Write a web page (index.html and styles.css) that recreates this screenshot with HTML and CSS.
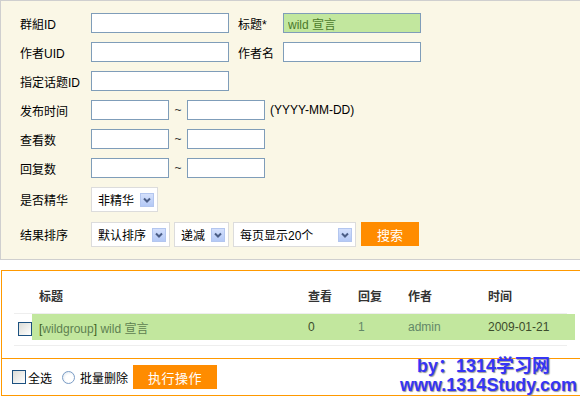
FILE: index.html
```html
<html>
  <head>
    <meta charset="utf-8" />
    <link rel="stylesheet" href="styles.css">
  </head>
  <body>
    <div class="search-panel">
      <div class="form-row">
        <span class="label">群組ID</span>
        <input type="text" class="text-input" />
        <span class="label label-inline">标题*</span>
        <input type="text" class="text-input is-filled" value="wild 宣言" />
      </div>
      <div class="form-row">
        <span class="label">作者UID</span>
        <input type="text" class="text-input" />
        <span class="label label-inline">作者名</span>
        <input type="text" class="text-input" />
      </div>
      <div class="form-row">
        <span class="label">指定话题ID</span>
        <input type="text" class="text-input" />
      </div>
      <div class="form-row">
        <span class="label">发布时间</span>
        <input type="text" class="text-input short" />
        <span class="tilde">~</span>
        <input type="text" class="text-input short" />
        <span class="hint">(YYYY-MM-DD)</span>
      </div>
      <div class="form-row">
        <span class="label">查看数</span>
        <input type="text" class="text-input short" />
        <span class="tilde">~</span>
        <input type="text" class="text-input short" />
      </div>
      <div class="form-row">
        <span class="label">回复数</span>
        <input type="text" class="text-input short" />
        <span class="tilde">~</span>
        <input type="text" class="text-input short" />
      </div>
      <div class="form-row select-row">
        <span class="label">是否精华</span>
        <div class="select w-67">
          <span>非精华</span>
          <span class="arrow"><svg width="14" height="14" viewBox="0 0 14 14"><polyline points="4,5.5 7,8.5 10,5.5" fill="none" stroke="#4a5d86" stroke-width="2"/></svg></span>
        </div>
      </div>
      <div class="form-row select-row last-row">
        <span class="label">结果排序</span>
        <div class="select w-79">
          <span>默认排序</span>
          <span class="arrow"><svg width="14" height="14" viewBox="0 0 14 14"><polyline points="4,5.5 7,8.5 10,5.5" fill="none" stroke="#4a5d86" stroke-width="2"/></svg></span>
        </div>
        <div class="select w-55">
          <span>递减</span>
          <span class="arrow"><svg width="14" height="14" viewBox="0 0 14 14"><polyline points="4,5.5 7,8.5 10,5.5" fill="none" stroke="#4a5d86" stroke-width="2"/></svg></span>
        </div>
        <div class="select w-123">
          <span>每页显示20个</span>
          <span class="arrow"><svg width="14" height="14" viewBox="0 0 14 14"><polyline points="4,5.5 7,8.5 10,5.5" fill="none" stroke="#4a5d86" stroke-width="2"/></svg></span>
        </div>
        <button class="btn-orange btn-search">搜索</button>
      </div>
    </div>

    <div class="results-panel">
      <div class="results-list">
        <div class="list-row list-head">
          <span class="cell-check"></span>
          <div class="row-cells">
            <span class="col-title">标题</span>
            <span class="col-num">查看</span>
            <span class="col-num">回复</span>
            <span class="col-author">作者</span>
            <span class="col-time">时间</span>
          </div>
        </div>
        <div class="list-row list-item">
          <span class="cell-check"><input type="checkbox" class="check" /></span>
          <div class="row-cells is-highlight">
            <span class="col-title title-link"><b>[</b>wildgroup<b>]</b> wild 宣言</span>
            <span class="col-num dark">0</span>
            <span class="col-num light">1</span>
            <span class="col-author light">admin</span>
            <span class="col-time dark">2009-01-21</span>
          </div>
        </div>
      </div>
      <div class="results-footer">
        <input type="checkbox" class="check" />
        <span class="footer-text">全选</span>
        <input type="radio" class="radio" />
        <span class="footer-text">批量删除</span>
        <button class="btn-orange btn-run">执行操作</button>
      </div>
      <div class="watermark">
        <div class="wm-line1">by：1314学习网</div>
        <div>www.1314Study.com</div>
      </div>
    </div>
  </body>
</html>
```

FILE: styles.css
```css
body {
  margin: 0;
  font-family: "Liberation Sans", "Noto Sans CJK SC", sans-serif;
  font-size: 12px;
  color: #000;
  background: #fff;
}
.search-panel {
  background: #faf7e6;
  border-top: 1px solid #cfcfcf;
  border-left: 1px solid #cfcfcf;
  border-bottom: 1px solid #cfcfcf;
  height: 258px;
  box-sizing: border-box;
  height: 260px;
  padding: 12px 0 0 19px;
  display: flex;
  flex-direction: column;
  gap: 9px;
}
.form-row {
  display: flex;
  align-items: center;
  height: 20px;
}
.select-row {
  height: 25px;
}
.last-row {
  margin-top: 1px;
}
.label {
  width: 71px;
}
.label-inline {
  width: 45px;
  margin-left: 9px;
}
.text-input {
  box-sizing: border-box;
  width: 138px;
  height: 20px;
  border: 1px solid #7f9db9;
  background: #fff;
  padding: 0 4px;
  font: inherit;
  outline: none;
}
.text-input.short {
  width: 78px;
}
.is-filled {
  background: #c2e79e;
  color: #4b7a2b;
}
.tilde {
  width: 18px;
  text-align: center;
  color: #333;
}
.hint {
  margin-left: 5px;
}
.select {
  box-sizing: border-box;
  height: 25px;
  border: 1px solid #dcdcdc;
  background: #fff;
  display: flex;
  align-items: center;
  justify-content: space-between;
  padding: 0 3px 0 6px;
  margin-right: 4px;
}
.w-67 { width: 67px; }
.w-79 { width: 79px; }
.w-55 { width: 55px; }
.w-123 { width: 123px; }
.arrow {
  width: 14px;
  height: 14px;
  box-sizing: border-box;
  border: 1px solid #b3c6ef;
  background: linear-gradient(#d4e0fc, #b4c9f6);
  display: flex;
}
.arrow svg {
  margin: -1px;
}
.btn-orange {
  border: 0;
  background: #ff8c00;
  color: #fff;
  font: inherit;
  font-size: 13px;
  padding: 0;
}
.btn-search {
  width: 58px;
  height: 24px;
  margin-left: 1px;
  margin-top: -1px;
}

.results-panel {
  position: relative;
  margin: 10px 0 0 1px;
  border-top: 1px solid #ff9900;
  border-left: 1px solid #ff9900;
  border-bottom: 1px solid #ff9900;
}
.results-list {
  padding: 16px 0 12px 12px;
  border-bottom: 1px solid #ff9900;
}
.list-row {
  display: flex;
  width: 553px;
  border-bottom: 1px solid #eeeeee;
}
.list-head {
  padding-bottom: 6px;
  line-height: 20px;
  font-weight: bold;
  color: #333;
}
.list-item {
  height: 31px;
  align-items: flex-start;
}
.cell-check {
  width: 18px;
  flex: none;
  padding: 8px 0 0 4px;
  box-sizing: border-box;
}
.list-head .cell-check {
  padding: 0;
}
.row-cells {
  display: flex;
  width: 543px;
  flex: none;
}
.row-cells span {
  padding-left: 7px;
  box-sizing: border-box;
}
.is-highlight {
  background: #c2e79e;
  height: 26px;
  align-items: center;
}
.col-title { width: 269px; }
.col-num { width: 50px; }
.col-author { width: 80px; }
.col-time { width: 94px; }
.title-link {
  color: #5e8150;
}
.title-link b {
  font-weight: normal;
  color: #3d6020;
}
.dark {
  color: #3c4c2c;
}
.light {
  color: #628868;
}
.check {
  appearance: none;
  margin: 0;
  width: 14px;
  height: 14px;
  border: 1px solid #1c5180;
  background: linear-gradient(135deg, #dcdcd6, #fff);
  box-sizing: border-box;
}
.radio {
  appearance: none;
  margin: 0 0 0 10px;
  width: 13px;
  height: 13px;
  border-radius: 50%;
  border: 1px solid #7a9cc5;
  background: radial-gradient(circle at 60% 60%, #fff 40%, #d8e2ec);
  box-sizing: border-box;
}
.results-footer {
  height: 36px;
  display: flex;
  align-items: center;
  padding-left: 10px;
}
.footer-text {
  margin-left: 2px;
}
.radio + .footer-text {
  margin-left: 5px;
}
.btn-run {
  width: 84px;
  height: 24px;
  margin-left: 5px;
  letter-spacing: 0.5px;
}
.watermark {
  position: absolute;
  left: 398px;
  top: 86px;
  font-family: "Liberation Sans", "Noto Sans CJK SC", sans-serif;
  font-weight: bold;
  font-size: 18px;
  line-height: 19px;
  color: #3535f5;
  text-shadow: 1px 1px 1px #9a9a9a;
}
.wm-line1 {
  padding-left: 17px;
}
```
